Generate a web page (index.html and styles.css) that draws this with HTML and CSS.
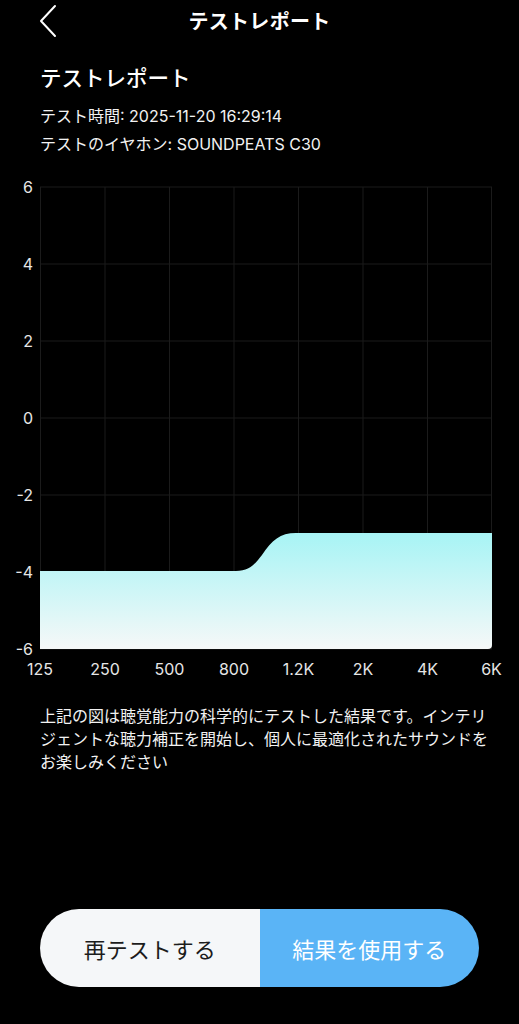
FILE: index.html
```html
<!DOCTYPE html>
<html lang="ja">
<head>
<meta charset="utf-8">
<title>テストレポート</title>
<link rel="stylesheet" href="styles.css">
</head>
<body>
<div class="page">
  <header class="topbar">
    <svg class="back" width="24" height="40" viewBox="0 0 24 40"><path d="M17 6 L3 21 L17 36" fill="none" stroke="#fff" stroke-width="2" stroke-linecap="round" stroke-linejoin="round"/></svg>
    <h1 class="title">テストレポート</h1>
  </header>
  <section class="info">
    <h2 class="heading">テストレポート</h2>
    <p class="meta">テスト時間: 2025-11-20 16:29:14</p>
    <p class="meta">テストのイヤホン: SOUNDPEATS C30</p>
  </section>
  <svg class="chart" width="519" height="520" viewBox="0 0 519 520">
    <defs>
      <linearGradient id="fill" x1="0" y1="363" x2="0" y2="479" gradientUnits="userSpaceOnUse">
        <stop offset="0" stop-color="#a7f4f5"/>
        <stop offset="1" stop-color="#f6f8f8"/>
      </linearGradient>
    </defs>
    <g class="grid">
      <line x1="40" y1="17" x2="492" y2="17"/>
      <line x1="40" y1="94" x2="492" y2="94"/>
      <line x1="40" y1="171" x2="492" y2="171"/>
      <line x1="40" y1="248" x2="492" y2="248"/>
      <line x1="40" y1="325" x2="492" y2="325"/>
      <line x1="40" y1="402" x2="492" y2="402"/>
      <line x1="40" y1="479" x2="492" y2="479"/>
      <line x1="40.5" y1="17" x2="40.5" y2="479"/>
      <line x1="105" y1="17" x2="105" y2="479"/>
      <line x1="169.5" y1="17" x2="169.5" y2="479"/>
      <line x1="234" y1="17" x2="234" y2="479"/>
      <line x1="298.5" y1="17" x2="298.5" y2="479"/>
      <line x1="363" y1="17" x2="363" y2="479"/>
      <line x1="427.5" y1="17" x2="427.5" y2="479"/>
      <line x1="491.5" y1="17" x2="491.5" y2="479"/>
    </g>
    <path d="M40 401 L236 401 C250 401 255 394 262 385 C272 370 280 363 296 363 L492 363 L492 475 Q492 479 488 479 L40 479 Z" fill="url(#fill)"/>
    <g class="ylab">
      <text x="33" y="23">6</text>
      <text x="33" y="100">4</text>
      <text x="33" y="177">2</text>
      <text x="33" y="254">0</text>
      <text x="33" y="331">-2</text>
      <text x="33" y="408">-4</text>
      <text x="33" y="485">-6</text>
    </g>
    <g class="xlab">
      <text x="40" y="505">125</text>
      <text x="105" y="505">250</text>
      <text x="169.5" y="505">500</text>
      <text x="234" y="505">800</text>
      <text x="298.5" y="505">1.2K</text>
      <text x="363" y="505">2K</text>
      <text x="427.5" y="505">4K</text>
      <text x="491.5" y="505">6K</text>
    </g>
  </svg>
  <p class="desc">上記の図は聴覚能力の科学的にテストした結果です。インテリジェントな聴力補正を開始し、個人に最適化されたサウンドをお楽しみください</p>
  <div class="actions">
    <button class="btn retest">再テストする</button>
    <button class="btn use">結果を使用する</button>
  </div>
</div>
</body>
</html>
```
FILE: styles.css
```css
* { box-sizing: border-box; }
html, body {
  margin: 0;
  padding: 0;
  background: #000;
}
body {
  width: 519px;
  height: 1024px;
  overflow: hidden;
  color: #fff;
  font-family: "Inter", "Noto Sans CJK JP", sans-serif;
}
.page {
  display: flex;
  flex-direction: column;
}
.topbar {
  position: relative;
  height: 44px;
  display: flex;
  align-items: center;
  justify-content: center;
}
.back {
  position: absolute;
  left: 38px;
  top: 0;
}
.title {
  margin: 0;
  font-size: 20px;
  font-weight: 700;
  line-height: 44px;
  letter-spacing: 0.3px;
}
.info {
  padding: 0 40px;
}
.heading {
  margin: 20px 0 0;
  font-size: 21.5px;
  font-weight: 500;
  line-height: 28px;
}
.meta {
  margin: 0;
  font-size: 16px;
  line-height: 28px;
  color: #f2f2f2;
}
.meta:first-of-type {
  margin-top: 10px;
}
.chart {
  display: block;
  margin-top: 12px;
}
.grid line {
  stroke: #1b1b1b;
  stroke-width: 1;
}
.ylab text, .xlab text {
  fill: #e6e6e6;
  font-family: "Inter", "Noto Sans CJK JP", sans-serif;
  font-size: 16px;
}
.ylab text { text-anchor: end; }
.xlab text { text-anchor: middle; }
.desc {
  margin: 15px 0 0;
  padding: 0 28px 0 40px;
  font-size: 16px;
  line-height: 23px;
  color: #f2f2f2;
}
.actions {
  display: flex;
  margin: 135px 40px 0;
  height: 78px;
  border-radius: 39px;
  overflow: hidden;
}
.btn {
  flex: 1;
  border: none;
  margin: 0;
  padding: 0;
  font-family: "Inter", "Noto Sans CJK JP", sans-serif;
  font-size: 22px;
}
.retest {
  background: #f5f7f9;
  color: #1c1c1c;
}
.use {
  background: #5ab4f6;
  color: #fff;
}
```
